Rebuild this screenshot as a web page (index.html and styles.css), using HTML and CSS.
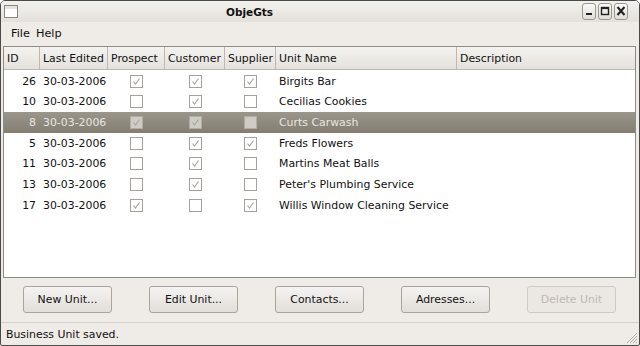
FILE: index.html
```html
<!DOCTYPE html>
<html lang="en">
<head>
  <meta charset="UTF-8"/>
  <title>ObjeGts</title>
  <link rel="stylesheet" href="styles.css">
</head>
<body>

  <div class="window">
    <!-- Title bar -->
    <div class="titlebar">
      <div class="win-icon"></div>
      <div class="title">ObjeGts</div>
      <div class="win-buttons">
        <div class="wbtn"><svg width="12" height="14" viewBox="0 0 12 14"><rect x="3" y="9" width="6" height="2" fill="#222"/></svg></div>
        <div class="wbtn"><svg width="12" height="14" viewBox="0 0 12 14"><rect x="2.5" y="3.5" width="7" height="7" fill="none" stroke="#222" stroke-width="1.4"/><rect x="2.5" y="3.5" width="7" height="1.6" fill="#222"/></svg></div>
        <div class="wbtn"><svg width="12" height="14" viewBox="0 0 12 14"><path d="M2.5 3 L9.5 11 M9.5 3 L2.5 11" stroke="#222" stroke-width="2"/></svg></div>
      </div>
    </div>

    <!-- Menu -->
    <div class="menubar">
      <span>File</span>
      <span>Help</span>
    </div>

    <!-- Unit list -->
    <div class="table-frame">
      <div class="row head">
        <div class="cell">ID</div>
        <div class="cell">Last Edited</div>
        <div class="cell">Prospect</div>
        <div class="cell">Customer</div>
        <div class="cell">Supplier</div>
        <div class="cell">Unit Name</div>
        <div class="cell">Description</div>
      </div>
      <div id="rows"></div>
    </div>

    <!-- Actions -->
    <div class="buttons">
      <button>New Unit...</button>
      <button>Edit Unit...</button>
      <button>Contacts...</button>
      <button>Adresses...</button>
      <button class="disabled">Delete Unit</button>
    </div>

    <div class="statusbar">
      <span>Business Unit saved.</span>
      <svg class="grip" width="14" height="14" viewBox="0 0 14 14">
        <path d="M13 3 L3 13 M13 6 L6 13 M13 9 L9 13 M13 12 L12 13" stroke="#b4b0a8" stroke-width="1"/>
      </svg>
    </div>
  </div>

  <script>
    const units = [
      [26, "30-03-2006", 1, 1, 1, "Birgits Bar"],
      [10, "30-03-2006", 0, 1, 0, "Cecilias Cookies"],
      [8,  "30-03-2006", 1, 1, 0, "Curts Carwash"],
      [5,  "30-03-2006", 0, 1, 1, "Freds Flowers"],
      [11, "30-03-2006", 0, 1, 0, "Martins Meat Balls"],
      [13, "30-03-2006", 0, 1, 0, "Peter's Plumbing Service"],
      [17, "30-03-2006", 1, 0, 1, "Willis Window Cleaning Service"]
    ];
    const selected = 8;
    const tick = '<svg width="9" height="9" viewBox="0 0 9 9"><path d="M1.5 4.5 L3.5 7 L7.5 1.5" fill="none" stroke="#a9a69f" stroke-width="1.2"/></svg>';

    const container = document.getElementById("rows");
    units.forEach(u => {
      const row = document.createElement("div");
      row.className = "row" + (u[0] === selected ? " selected" : "");
      let html = '<div class="cell num">' + u[0] + '</div>';
      html += '<div class="cell">' + u[1] + '</div>';
      for (let i = 2; i <= 4; i++) {
        html += '<div class="cell check"><span class="box">' + (u[i] ? tick : '') + '</span></div>';
      }
      html += '<div class="cell">' + u[5] + '</div><div class="cell"></div>';
      row.innerHTML = html;
      container.appendChild(row);
    });
  </script>
</body>
</html>
```

FILE: styles.css
```css
body {
  margin: 0;
  font-family: 'DejaVu Sans', sans-serif;
  font-size: 10.9px;
  color: #111;
  background: #fff;
}

.window {
  width: 640px;
  height: 346px;
  box-sizing: border-box;
  background: #efebe7;
  border: 1px solid #4a4a48;
  border-radius: 5px 5px 2px 2px;
  display: flex;
  flex-direction: column;
  overflow: hidden;
}

.titlebar {
  height: 21px;
  display: flex;
  align-items: center;
  background: linear-gradient(#f3f1ee, #e4e1dc);
}

.win-icon {
  width: 12px;
  height: 11px;
  margin-left: 3px;
  border: 1px solid #8a8780;
  background: linear-gradient(#e6e3df 30%, #fff 30%);
}

.title {
  font-weight: bold;
  font-size: 10.5px;
  margin-left: 208px;
}

.win-buttons {
  display: flex;
  gap: 2px;
  margin-left: auto;
  margin-right: 11px;
}

.wbtn {
  width: 12px;
  height: 15px;
  border: 1px solid #9c9890;
  border-radius: 3px;
  background: linear-gradient(#fbfaf9, #e0ddd8);
  display: flex;
}

.menubar {
  height: 22px;
  display: flex;
  align-items: center;
  gap: 6px;
  padding-left: 10px;
  font-size: 11.3px;
}

.table-frame {
  margin: 2px 3px 0 2px;
  height: 232px;
  box-sizing: border-box;
  border: 1px solid #8e8b84;
  background: #fff;
}

#rows {
  padding-top: 1px;
}

.row {
  display: grid;
  grid-template-columns: 36px 68px 57px 60px 51px 181px 1fr;
  height: 20.67px;
  align-items: center;
}

.row.head {
  height: 23px;
  background: linear-gradient(#f4f2ef, #e5e2dd);
  border-bottom: 1px solid #bdb9b1;
  box-sizing: border-box;
}

.head .cell {
  height: 100%;
  display: flex;
  align-items: center;
  padding-left: 3px;
  border-right: 1px solid #bdb9b1;
}

.head .cell:last-child {
  border-right: none;
}

.cell {
  padding-left: 3px;
  white-space: nowrap;
  overflow: hidden;
}

.cell.num {
  text-align: right;
  padding-right: 4px;
}

.cell.check {
  display: flex;
  justify-content: center;
  padding-left: 0;
}

.box {
  width: 11px;
  height: 11px;
  border: 1px solid #a5a29b;
  background: #fff;
  display: flex;
  align-items: center;
  justify-content: center;
}

.row.selected {
  background: linear-gradient(#9a968b, #847e71);
  color: #e8e6e0;
}

.row.selected .box {
  background: #cfccc5;
  border-color: #b0ada5;
}

.buttons {
  display: flex;
  gap: 37px;
  padding: 8px 0 0 22px;
  height: 29px;
}

.buttons button {
  width: 89px;
  height: 27px;
  font-family: 'DejaVu Sans', sans-serif;
  font-size: 10.9px;
  color: #111;
  border: 1px solid #a9a59d;
  border-radius: 3px;
  background: linear-gradient(#f5f3f1, #e2ded9);
}

.buttons button.disabled {
  color: #bdb9b2;
  border-color: #cfcbc4;
  background: #ebe7e3;
}

.statusbar {
  margin-top: 7px;
  flex: 1;
  border-top: 1px solid #d6d2cb;
  display: flex;
  align-items: center;
  padding-left: 5px;
  position: relative;
}

.grip {
  position: absolute;
  right: 1px;
  bottom: 1px;
}
```
